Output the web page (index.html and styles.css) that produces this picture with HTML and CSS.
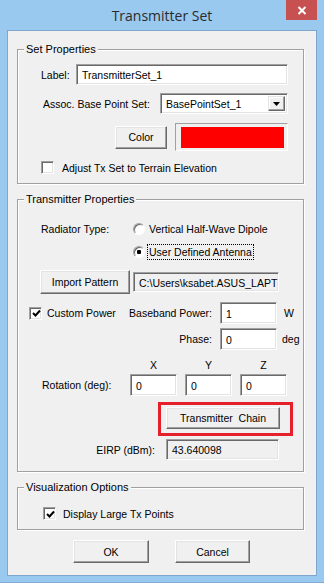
FILE: index.html
```html
<!DOCTYPE html>
<html lang="en">

<head>
    <meta charset="UTF-8">
    <meta name="viewport" content="width=device-width, initial-scale=1.0">
    <title>Transmitter Set</title>
    <link rel="stylesheet" href="styles.css">
</head>

<body>

    <div class="window">
        <div class="titlebar">
            <div class="title">Transmitter Set</div>
            <div class="close">
                <svg width="10" height="9" viewBox="0 0 10 9">
                    <path d="M1.5 1 L8.5 8 M8.5 1 L1.5 8" stroke="#fff" stroke-width="2" />
                </svg>
            </div>
        </div>

        <div class="client">

            <!-- Set Properties -->
            <div class="group group_set">
                <div class="group_title">Set Properties</div>

                <div class="row row_label">
                    <span class="lbl_label">Label:</span>
                    <div class="field field_label">TransmitterSet_1</div>
                </div>

                <div class="row row_assoc">
                    <span class="lbl_assoc">Assoc. Base Point Set:</span>
                    <div class="field field_select">
                        <span class="select_text">BasePointSet_1</span>
                        <span class="select_btn">
                            <svg width="7" height="4" viewBox="0 0 7 4">
                                <path d="M0 0 H7 L3.5 4 Z" fill="#000" />
                            </svg>
                        </span>
                    </div>
                </div>

                <div class="row row_color">
                    <div class="btn btn_color">Color</div>
                    <div class="swatch">
                        <div class="swatch_fill"></div>
                    </div>
                </div>

                <div class="row row_check1">
                    <span class="check"></span>
                    <span class="check_text">Adjust Tx Set to Terrain Elevation</span>
                </div>
            </div>

            <!-- Transmitter Properties -->
            <div class="group group_tx">
                <div class="group_title">Transmitter Properties</div>

                <div class="row row_radio1">
                    <span class="lbl_radiator">Radiator Type:</span>
                    <span class="radio"></span>
                    <span class="radio_text">Vertical Half-Wave Dipole</span>
                </div>

                <div class="row row_radio2">
                    <span class="radio radio_on"></span>
                    <span class="radio_text radio_focus">User Defined Antenna</span>
                </div>

                <div class="row row_import">
                    <div class="btn btn_import">Import Pattern</div>
                    <div class="field field_ro field_path">C:\Users\ksabet.ASUS_LAPT</div>
                </div>

                <div class="row row_power">
                    <div class="power_left">
                        <span class="check check_on">
                            <svg width="9" height="9" viewBox="0 0 9 9">
                                <path d="M1 4 L3.5 6.5 L8 1.5" stroke="#000" stroke-width="2" fill="none" />
                            </svg>
                        </span>
                        <span class="power_text">Custom Power</span>
                    </div>
                    <span class="rlabel">Baseband Power:</span>
                    <div class="field field_num">1</div>
                    <span class="unit unit_w">W</span>
                </div>

                <div class="row row_phase">
                    <span class="rlabel">Phase:</span>
                    <div class="field field_num">0</div>
                    <span class="unit unit_deg">deg</span>
                </div>

                <div class="rotation">
                    <span class="axis axis_x">X</span>
                    <span class="axis">Y</span>
                    <span class="axis">Z</span>
                    <span class="lbl_rotation">Rotation (deg):</span>
                    <div class="field field_rot">0</div>
                    <div class="field field_rot">0</div>
                    <div class="field field_rot">0</div>
                </div>

                <div class="highlight">
                    <div class="btn btn_chain">Transmitter&nbsp; Chain</div>
                </div>

                <div class="row row_eirp">
                    <span class="lbl_eirp">EIRP (dBm):</span>
                    <div class="field field_ro field_eirp">43.640098</div>
                </div>
            </div>

            <!-- Visualization Options -->
            <div class="group group_vis">
                <div class="group_title">Visualization Options</div>

                <div class="row row_check2">
                    <span class="check check_on">
                        <svg width="9" height="9" viewBox="0 0 9 9">
                            <path d="M1 4 L3.5 6.5 L8 1.5" stroke="#000" stroke-width="2" fill="none" />
                        </svg>
                    </span>
                    <span class="check_text2">Display Large Tx Points</span>
                </div>
            </div>

            <div class="buttons">
                <div class="btn btn_ok">OK</div>
                <div class="btn btn_cancel">Cancel</div>
            </div>

        </div>
    </div>

</body>

</html>
```

FILE: styles.css
```css
body {
    margin: 0;
    font-family: "Liberation Sans", Arial, sans-serif;
    font-size: 10.5px;
    color: #000;
}

.window {
    width: 324px;
    height: 583px;
    background-color: #99c9ef;
    display: flex;
    flex-direction: column;
    box-sizing: border-box;
    border-bottom: 1px solid #83abd3;
}

/* title bar */
.titlebar {
    height: 30px;
    flex: none;
    display: grid;
    grid-template-columns: 1fr auto 1fr;
}

.title {
    grid-column: 2;
    align-self: center;
    font-family: "Open Sans", sans-serif;
    font-size: 14px;
    color: #2b2b2b;
    padding-top: 1px;
}

.close {
    grid-column: 3;
    justify-self: end;
    align-self: start;
    margin-right: 7px;
    width: 31px;
    height: 20px;
    background-color: #c75050;
    display: flex;
    align-items: center;
    justify-content: center;
}

/* client area */
.client {
    flex: 1;
    margin: 0 7px 6px 7px;
    border: 1px solid #7fa6cc;
    background-color: #f0f0f0;
    display: flex;
    flex-direction: column;
}

.group {
    flex: none;
    margin-left: 9px;
    width: 287px;
    box-sizing: border-box;
    border: 1px solid #a0a0a0;
    box-shadow: inset 1px 1px 0 #fff, 1px 1px 0 #fff;
    display: flex;
    flex-direction: column;
}

.group_title {
    align-self: flex-start;
    height: 14px;
    line-height: 14px;
    margin: -8px 0 -6px 6px;
    padding: 0 2px;
    background-color: #f0f0f0;
    font-size: 11px;
}

.group_set {
    margin-top: 18px;
    height: 135px;
}

.group_tx {
    margin-top: 15px;
    height: 273px;
}

.group_vis {
    margin-top: 15px;
    height: 43px;
}

.row {
    display: flex;
    align-items: center;
    flex: none;
}

/* 3d controls */
.field {
    box-sizing: border-box;
    background-color: #fff;
    border: 1px solid;
    border-color: #a0a0a0 #fff #fff #a0a0a0;
    box-shadow: inset 1px 1px 0 #696969, inset -1px -1px 0 #e3e3e3;
    padding: 1px 3px 0 5px;
    display: flex;
    align-items: center;
    white-space: nowrap;
    overflow: hidden;
}

.field_ro {
    background-color: #f0f0f0;
}

.btn {
    box-sizing: border-box;
    background-color: #f0f0f0;
    border: 1px solid;
    border-color: #fff #696969 #696969 #fff;
    box-shadow: inset -1px -1px 0 #a0a0a0, inset 1px 1px 0 #e3e3e3;
    display: flex;
    align-items: center;
    justify-content: center;
    white-space: nowrap;
}

.check {
    box-sizing: border-box;
    width: 13px;
    height: 13px;
    flex: none;
    background-color: #fff;
    border: 1px solid;
    border-color: #a0a0a0 #fff #fff #a0a0a0;
    box-shadow: inset 1px 1px 0 #696969, inset -1px -1px 0 #e3e3e3;
    display: flex;
    align-items: center;
    justify-content: center;
}

.check svg {
    margin: 1px 0 0 1px;
}

.radio {
    box-sizing: border-box;
    width: 12px;
    height: 12px;
    flex: none;
    border-radius: 50%;
    background-color: #fff;
    border: 1px solid;
    border-color: #a0a0a0 #fff #fff #a0a0a0;
    box-shadow: inset 1px 1px 0 #696969;
}

.radio_on {
    background: radial-gradient(circle at 50% 50%, #000 0, #000 2px, #fff 2.5px);
}

/* set properties */
.row_label {
    margin-top: 14px;
    height: 21px;
    padding-left: 23px;
}

.lbl_label {
    width: 35px;
}

.field_label {
    width: 212px;
    height: 21px;
}

.row_assoc {
    margin-top: 8px;
    height: 21px;
    padding-left: 25px;
}

.lbl_assoc {
    width: 117px;
}

.field_select {
    width: 128px;
    height: 21px;
    padding: 2px 2px 2px 5px;
    align-items: stretch;
}

.select_text {
    flex: 1;
    display: flex;
    align-items: center;
}

.select_btn {
    width: 17px;
    box-sizing: border-box;
    background-color: #f0f0f0;
    border: 1px solid;
    border-color: #e3e3e3 #696969 #696969 #e3e3e3;
    box-shadow: inset -1px -1px 0 #a0a0a0, inset 1px 1px 0 #fff;
    display: flex;
    align-items: center;
    justify-content: center;
}

.row_color {
    margin-top: 9px;
    height: 28px;
    padding-left: 97px;
}

.btn_color {
    width: 52px;
    height: 23px;
}

.swatch {
    margin-left: 8px;
    width: 113px;
    height: 28px;
    box-sizing: border-box;
    border: 1px solid;
    border-color: #a0a0a0 #fff #fff #a0a0a0;
    padding: 3px 3px 2px 5px;
}

.swatch_fill {
    height: 100%;
    background-color: #ff0000;
}

.row_check1 {
    margin-top: 10px;
    height: 13px;
    padding-left: 23px;
}

.check_text {
    margin-left: 8px;
}

/* transmitter properties */
.row_radio1 {
    margin-top: 21px;
    height: 16px;
    padding-left: 23px;
}

.lbl_radiator {
    width: 92px;
}

.radio_text {
    margin-left: 2px;
    padding: 0 1px;
    line-height: 14px;
    border: 1px dotted transparent;
}

.radio_focus {
    border-color: #000;
}

.row_radio2 {
    margin-top: 7px;
    height: 16px;
    padding-left: 115px;
}

.row_import {
    margin-top: 10px;
    height: 24px;
    padding-left: 22px;
}

.btn_import {
    width: 90px;
    height: 24px;
}

.field_path {
    margin-left: 3px;
    width: 146px;
    height: 20px;
}

.row_power {
    margin-top: 8px;
    height: 22px;
    padding-left: 11px;
}

.power_left {
    width: 100px;
    display: flex;
    align-items: center;
}

.power_text {
    margin-left: 5px;
}

.rlabel {
    width: 83px;
    display: flex;
    justify-content: flex-end;
    white-space: nowrap;
}

.field_num {
    margin-left: 8px;
    width: 57px;
    height: 22px;
}

.unit_w {
    margin-left: 7px;
}

.unit_deg {
    margin-left: 5px;
}

.row_phase {
    margin-top: 4px;
    height: 22px;
    padding-left: 111px;
}

.rotation {
    margin-top: 8px;
    padding-left: 24px;
    display: grid;
    grid-template-columns: 80px 47px 47px 47px;
    grid-template-rows: 14px 22px;
    column-gap: 8px;
    row-gap: 2px;
}

.axis {
    text-align: center;
    line-height: 14px;
}

.axis_x {
    grid-column: 2;
}

.lbl_rotation {
    grid-column: 1;
    align-self: center;
    white-space: nowrap;
}

.field_rot {
    height: 22px;
}

.highlight {
    align-self: flex-start;
    margin: 6px 0 0 140px;
    border: 3px solid #e5202a;
    padding: 2px 10px 4px 5px;
}

.btn_chain {
    width: 114px;
    height: 22px;
}

.row_eirp {
    margin-top: 3px;
    height: 21px;
}

.lbl_eirp {
    width: 137px;
    display: flex;
    justify-content: flex-end;
}

.field_eirp {
    margin-left: 11px;
    width: 113px;
    height: 21px;
}

/* visualization */
.row_check2 {
    margin-top: 19px;
    height: 13px;
    padding-left: 25px;
}

.check_text2 {
    margin-left: 7px;
}

.buttons {
    margin-top: 10px;
    padding-left: 65px;
    display: flex;
}

.btn_ok {
    width: 76px;
    height: 23px;
}

.btn_cancel {
    margin-left: 26px;
    width: 75px;
    height: 23px;
}
```
